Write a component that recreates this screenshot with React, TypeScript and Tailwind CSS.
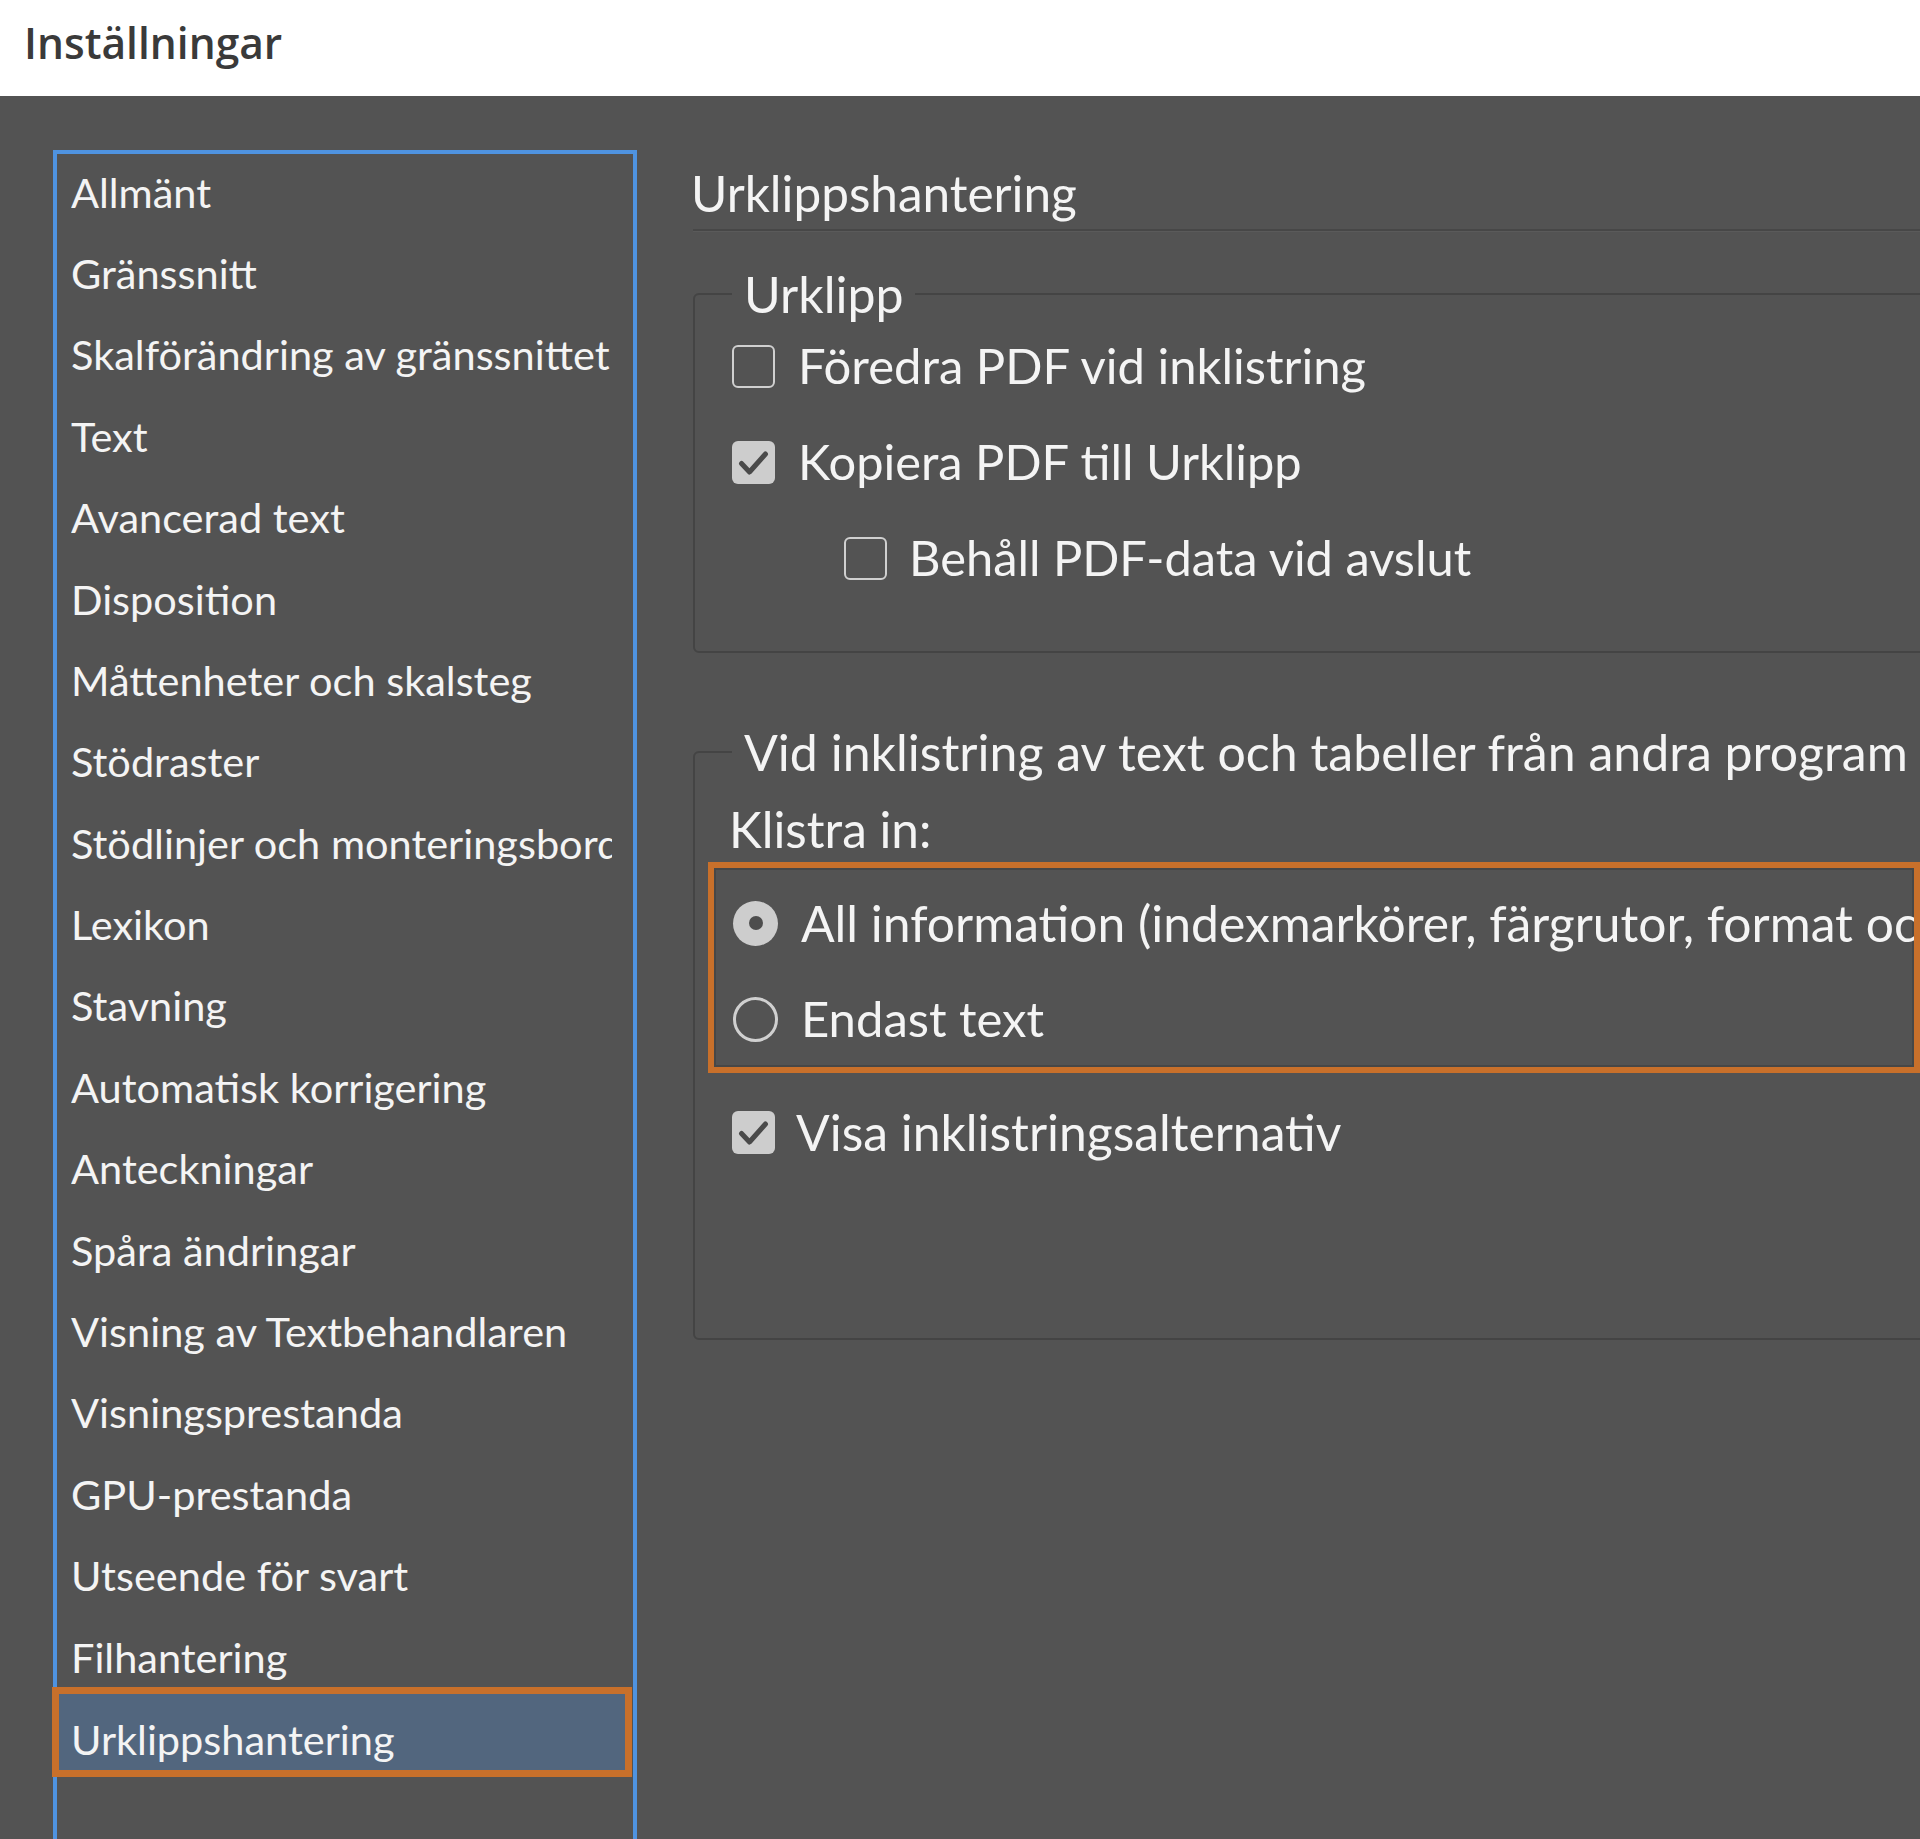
import React from "react";

const items = [
  "Allmänt",
  "Gränssnitt",
  "Skalförändring av gränssnittet",
  "Text",
  "Avancerad text",
  "Disposition",
  "Måttenheter och skalsteg",
  "Stödraster",
  "Stödlinjer och monteringsbord",
  "Lexikon",
  "Stavning",
  "Automatisk korrigering",
  "Anteckningar",
  "Spåra ändringar",
  "Visning av Textbehandlaren",
  "Visningsprestanda",
  "GPU-prestanda",
  "Utseende för svart",
  "Filhantering",
];

function BoxOff() {
  return <div className="w-[43px] h-[43px] shrink-0 rounded-[6px] border-2 border-[#d0d0d0]" />;
}

function BoxOn() {
  return (
    <div className="w-[43px] h-[43px] shrink-0 rounded-[6px] bg-[#cdcdcd] flex items-center justify-center">
      <svg width="43" height="43" viewBox="0 0 43 43" className="block">
        <path
          d="M9.5 22.5 L17.5 31 L33.5 13"
          fill="none"
          stroke="#4a4a4a"
          strokeWidth="5"
          strokeLinecap="round"
          strokeLinejoin="round"
        />
      </svg>
    </div>
  );
}

function RadioOn() {
  return (
    <div className="w-[45px] h-[45px] shrink-0 rounded-full bg-[#cdcdcd] flex items-center justify-center">
      <div className="w-[14px] h-[14px] rounded-full bg-[#4d4d4d]" />
    </div>
  );
}

function RadioOff() {
  return <div className="w-[45px] h-[45px] shrink-0 rounded-full border-[3px] border-[#d0d0d0]" />;
}

export default function App() {
  return (
    <div className="w-[1920px] h-[1839px] overflow-hidden bg-[#535353] [font-family:Lato,sans-serif] text-[#f4f4f4]">
      <div className="h-[96px] bg-white flex items-center pl-[24px] pb-[10px]">
        <span className="[font-family:'Open_Sans',sans-serif] font-semibold text-[42.5px] text-[#3a3a3a]">
          Inställningar
        </span>
      </div>

      <div className="flex pt-[54px] pl-[53px]">
        <div className="w-[584px] h-[1700px] shrink-0 border-4 border-b-0 border-[#4f93e0]">
          <div className="-mt-[3px]">
            {items.map((t) => (
              <div key={t} className="h-[81.4px] flex items-center pl-[14px] text-[41.5px] whitespace-nowrap">
                <span className="block w-[541px] overflow-hidden">{t}</span>
              </div>
            ))}
            <div className="-mt-[10.6px] -ml-[5px] w-[580px] h-[90px] border-[7px] border-[#c8702b] bg-[#52667e] pt-[14px] pl-[12px] flex items-center text-[41.5px] whitespace-nowrap">
              Urklippshantering
            </div>
          </div>
        </div>

        <div className="ml-[56px] w-[1400px] shrink-0">
          <div className="h-[81px] border-b-2 border-[#474747] shadow-[0_1px_0_#5a5a5a] pt-[13px]">
            <div className="-ml-[2px] text-[49.5px] leading-[60px]">Urklippshantering</div>
          </div>

          <fieldset className="mt-[39px] w-[1400px] border-2 border-[#444444] rounded-[6px] pl-[37px] pb-[45px]">
            <legend className="px-[12px] text-[50px] leading-[48px]">Urklipp</legend>
            <div className="h-[96px] flex items-center">
              <BoxOff />
              <span className="ml-[23px] text-[49px] whitespace-nowrap">Föredra PDF vid inklistring</span>
            </div>
            <div className="h-[96px] flex items-center">
              <BoxOn />
              <span className="ml-[23px] text-[48.8px] whitespace-nowrap">Kopiera PDF till Urklipp</span>
            </div>
            <div className="h-[96px] flex items-center pl-[112px]">
              <BoxOff />
              <span className="ml-[22px] text-[48.8px] whitespace-nowrap">Behåll PDF-data vid avslut</span>
            </div>
          </fieldset>

          <fieldset className="mt-[75px] w-[1400px] border-2 border-[#444444] rounded-[6px] pl-[13px] pb-[158px]">
            <legend className="ml-[24px] px-[12px] text-[50px] leading-[48px] whitespace-nowrap">
              Vid inklistring av text och tabeller från andra program
            </legend>
            <div className="mt-[29px] ml-[21px] h-[48px] leading-[48px] text-[49.5px]">Klistra in:</div>
            <div className="mt-[9px] w-[1212px] h-[211px] border-[6px] border-[#c8702b] shadow-[inset_0_0_0_2px_#474747] pt-[7px] pl-[19px] overflow-hidden">
              <div className="h-[96px] flex items-center">
                <RadioOn />
                <span className="ml-[23px] text-[49.8px] whitespace-nowrap">
                  All information (indexmarkörer, färgrutor, format och så vidare)
                </span>
              </div>
              <div className="h-[96px] flex items-center">
                <RadioOff />
                <span className="ml-[23px] text-[49px] whitespace-nowrap">Endast text</span>
              </div>
            </div>
            <div className="mt-[11px] ml-[24px] h-[96px] flex items-center">
              <BoxOn />
              <span className="ml-[21px] text-[49.8px] whitespace-nowrap">Visa inklistringsalternativ</span>
            </div>
          </fieldset>
        </div>
      </div>
    </div>
  );
}
